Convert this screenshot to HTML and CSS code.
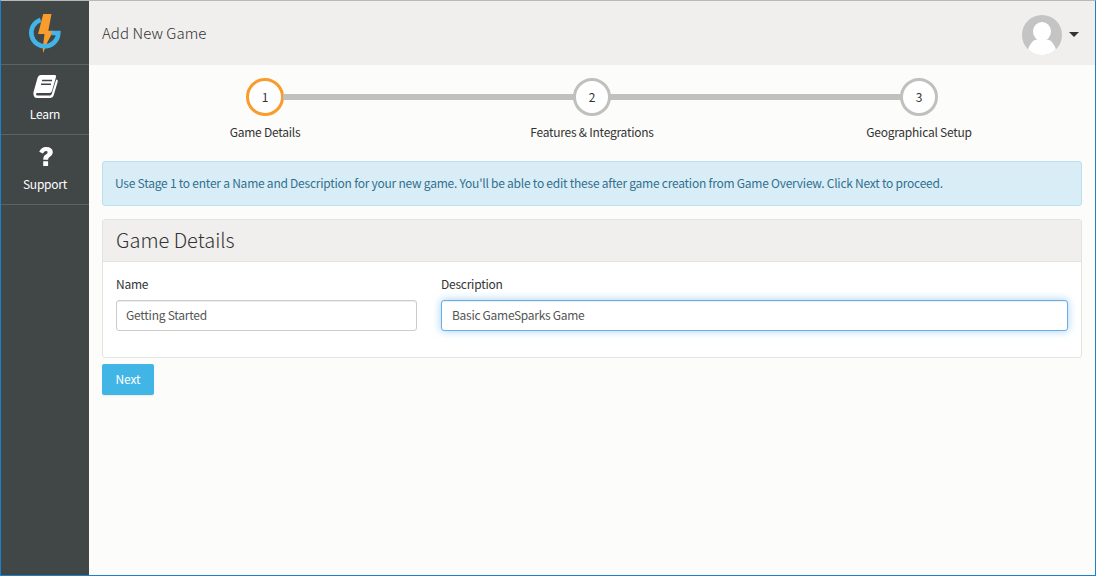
FILE: index.html
```html
<!DOCTYPE html>
<html lang="en">
<head>
<meta charset="utf-8">
<title>Add New Game</title>
<link rel="stylesheet" href="styles.css">
</head>
<body>
<div class="app">
  <nav class="sidebar">
    <a class="brand">
      <svg width="34" height="42" viewBox="0 0 34 42">
        <path d="M15.200 3h8.300l-3.200 16.700h5L18.500 33l-3.300 9-.5-4.500L16.500 23h-6.400z" fill="#f89c2c"/>
        <path d="M12.600 8.900A13.500 13.500 0 1 0 30.300 22H23.500" fill="none" stroke="#43b4e7" stroke-width="4.600"/>
      </svg>
    </a>
    <a class="nav-item">
      <svg class="nav-icon" width="26" height="24" viewBox="0 0 26 24">
        <g transform="translate(1)">
        <path d="M8 0h13.500q2 0 1.500 2l-4 14q-.7 2-2.600 2H4.500q-1.500 0-1.500 1.200 0 1.300 1.700 1.300h12q1.500 0 2-1.500L23.200 4.500q2 .5 1.500 2.200l-4 13.500Q20 23 17.500 23H4Q1 23 .5 19.500q-.3-1.200.2-3L4.500 3Q5.500 0 8 0z" fill="#fff"/>
        <path d="M9 5.500h10M8 9.300h10" stroke="#414647" stroke-width="1.500"/>
        </g>
      </svg>
      <span>Learn</span>
    </a>
    <a class="nav-item">
      <svg class="nav-icon" width="26" height="24" viewBox="0 0 26 24">
        <path d="M7.200 6.700Q9.300 2 14 2q6.800 0 6.800 5.500 0 2.600-3.200 4.500-1.500.9-1.500 2.700h-4.900q0-3.900 2.700-5.300 1.700-.9 1.700-2 0-1.400-1.500-1.400-1.700 0-3.200 2.400zM11.200 16.300h4.900V21h-4.900z" fill="#fff"/>
      </svg>
      <span>Support</span>
    </a>
  </nav>
  <div class="page">
    <header class="topbar">
      <h1 class="page-title">Add New Game</h1>
      <div class="account">
        <svg class="avatar" width="40" height="40" viewBox="0 0 40 40">
          <defs><clipPath id="disc"><circle cx="20" cy="20" r="20"/></clipPath></defs>
          <g clip-path="url(#disc)">
            <path d="M0 0h40v40H0z" fill="#c4c4c4"/>
            <ellipse cx="20" cy="16.500" rx="9" ry="9.500" fill="#fff"/>
            <path d="M5.500 36Q9 24.500 15 24.500h10Q31 24.500 34.500 36v4h-29z" fill="#fff"/>
          </g>
        </svg>
        <span class="caret"></span>
      </div>
    </header>
    <main class="content">
      <ol class="steps">
        <li class="step active"><span class="dot">1</span><span class="step-label">Game Details</span></li>
        <li class="step"><span class="dot">2</span><span class="step-label">Features &amp; Integrations</span></li>
        <li class="step"><span class="dot">3</span><span class="step-label">Geographical Setup</span></li>
      </ol>
      <div class="alert"><span class="alert-text">Use Stage 1 to enter a Name and Description for your new game. You'll be able to edit these after game creation from Game Overview. Click Next to proceed.</span></div>
      <section class="panel">
        <h2 class="panel-title">Game Details</h2>
        <div class="panel-body">
          <label class="field">Name<input type="text" class="input" value="Getting Started"></label>
          <label class="field">Description<input type="text" class="input focused" value="Basic GameSparks Game"></label>
        </div>
      </section>
      <button class="btn">Next</button>
    </main>
  </div>
</div>
</body>
</html>
```
FILE: styles.css
```css
* { box-sizing: border-box; }
body {
  margin: 0;
  font: 12px/18px "Noto Sans CJK SC", "Open Sans", sans-serif;
  letter-spacing: -.24px;
  color: #333;
}
.app {
  display: flex;
  height: 576px;
  border: 1px solid #1a80d0;
  border-top-color: #b9b9b9;
  background: #fcfcfa;
}
.sidebar {
  width: 88px;
  flex: none;
  background: #414647;
  color: #fff;
}
.brand {
  display: flex;
  justify-content: center;
  height: 64px;
  padding-top: 10px;
  border-bottom: 1px solid #5e6263;
}
.nav-item {
  display: flex;
  flex-direction: column;
  align-items: center;
  height: 70px;
  padding-top: 10px;
  border-bottom: 1px solid #5e6263;
}
.nav-icon { margin-bottom: 6px; }
.page { flex: 1; min-width: 0; }
.topbar {
  display: flex;
  justify-content: space-between;
  align-items: center;
  height: 64px;
  padding: 0 16px 0 13px;
  background: #f0efee;
}
.page-title {
  margin: 0;
  font-size: 15px;
  font-weight: 300;
  letter-spacing: .05px;
}
.account { display: flex; align-items: center; gap: 7px; padding-top: 4px; }
.caret {
  margin-bottom: 2px;
  border: 5px solid transparent;
  border-top-color: #333;
  border-bottom: 0;
}
.content { padding: 13px 13px 0; }
.steps {
  display: grid;
  grid-template-columns: repeat(3, 327px);
  margin: 0 0 20px -1px;
  padding: 0;
  list-style: none;
}
.step {
  display: flex;
  flex-direction: column;
  align-items: center;
  position: relative;
}
.step + .step::before {
  content: "";
  position: absolute;
  top: 16px;
  right: calc(50% + 18px);
  width: 291px;
  height: 6px;
  background: #c0c0bf;
}
.dot {
  width: 38px;
  height: 38px;
  border: 3px solid #c0c0bf;
  border-radius: 50%;
  background: #fff;
  line-height: 32px;
  text-align: center;
  text-indent: 1px;
}
.active .dot { border-color: #f89c2c; }
.step-label { margin-top: 7px; padding-left: 1px; }
.alert {
  height: 45px;
  padding: 12px 12px;
  border: 1px solid #bce0f0;
  border-radius: 3px;
  background: #d9edf7;
  color: #31708f;
  white-space: nowrap;
}
.panel {
  height: 139px;
  margin: 13px 0 6px;
  border: 1px solid #e3e3e2;
  border-radius: 3px;
  background: #fff;
}
.panel-title {
  height: 42px;
  margin: 0;
  padding-left: 13px;
  border-bottom: 1px solid #e3e3e2;
  background: #f0efee;
  font-size: 20px;
  font-weight: 300;
  letter-spacing: 0;
  line-height: 39px;
}
.panel-body {
  display: grid;
  grid-template-columns: 301px 627px;
  column-gap: 24px;
  padding: 13px 13px 0;
}
.input {
  display: block;
  width: 100%;
  height: 31px;
  margin-top: 7px;
  padding: 0 9px 2px;
  border: 1px solid #ccc;
  border-radius: 3px;
  outline: none;
  background: #fff;
  box-shadow: inset 0 1px 1px rgba(0, 0, 0, .075);
  color: #555;
  font: inherit;
  letter-spacing: inherit;
}
.focused {
  padding-left: 10px;
  border-color: #66afe9;
  box-shadow: inset 0 1px 1px rgba(0, 0, 0, .075), 0 0 8px rgba(102, 175, 233, .6);
  letter-spacing: -.29px;
}
.btn {
  display: block;
  width: 52px;
  height: 31px;
  padding: 0 0 2px;
  border: 0;
  border-radius: 2px;
  background: #41b5e6;
  box-shadow: 0 1px 2px rgba(0, 0, 0, .08);
  color: #fff;
  font: inherit;
  letter-spacing: -.1px;
}
```
